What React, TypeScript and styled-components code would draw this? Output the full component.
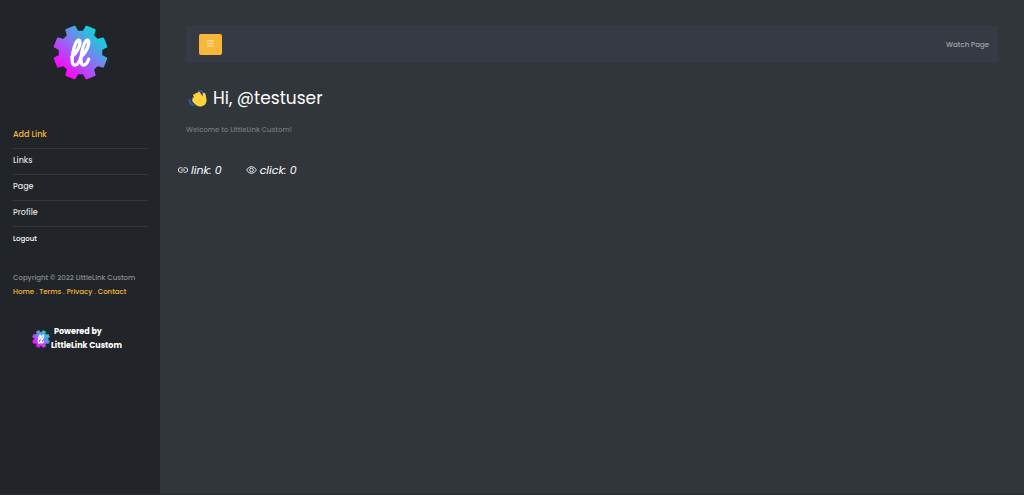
import React from "react";
import styled, { createGlobalStyle } from "styled-components";

const GlobalStyle = createGlobalStyle`
  *, *::before, *::after { box-sizing: border-box; }
  body {
    margin: 0;
    background: #31363b;
    color: #fff;
    font-family: Poppins, Inter, "Open Sans", sans-serif;
    font-size: 7px;
    font-weight: 500;
    line-height: 14px;
  }
`;

const Layout = styled.div`
  display: flex;
  min-height: 100vh;
  border-bottom: 1px solid #2a2a31;
`;

const Sidebar = styled.aside`
  flex: 0 0 160px;
  min-width: 0;
  padding: 25px 12px 0 13px;
  background: #212529;
`;

const Brand = styled.a`
  display: flex;
  justify-content: center;
  padding-bottom: 43px;
`;

const Menu = styled.ul`
  list-style: none;
  margin: 0;
  padding: 0;
`;

const MenuItem = styled.li`
  & + & { border-top: 1px solid #33373c; }
`;

const MenuLink = styled.a<{ $active?: boolean }>`
  display: block;
  padding: 4px 0 6px;
  font-size: 8px;
  line-height: 15px;
  text-decoration: none;
  color: ${(p) => (p.$active ? "#f8b739" : "#dcddde")};
`;

const LogoutButton = styled.button`
  display: block;
  padding: 4px 0;
  border: 0;
  background: none;
  color: #fff;
  font: inherit;
  line-height: 15px;
`;

const Footer = styled.footer`
  margin-top: 21px;
  color: #8a8c8f;
  white-space: nowrap;
`;

const FooterLink = styled.a`
  color: #f8b739;
  text-decoration: none;
`;

const Powered = styled.a`
  display: flex;
  align-items: center;
  gap: 1px;
  margin: 26px 0 0 19px;
  color: #fff;
  font-size: 8px;
  font-weight: 700;
  text-decoration: none;
  white-space: nowrap;
`;

const PoweredText = styled.span`
  text-indent: 3px;
  & > span { display: block; text-indent: 0; }
`;

const Main = styled.main`
  flex: 1;
  min-width: 0;
  padding: 26px 26px 0;
`;

const Navbar = styled.nav`
  display: flex;
  align-items: center;
  justify-content: space-between;
  padding: 8px 9px 8px 13px;
  background: #353a43;
`;

const MenuToggle = styled.button`
  display: flex;
  align-items: center;
  justify-content: center;
  width: 23px;
  height: 21px;
  padding: 0 0 2px;
  border: 0;
  border-radius: 2px;
  background: #f8b739;
`;

const WatchLink = styled.a`
  color: #a5a7aa;
  text-decoration: none;
`;

const Greeting = styled.h2`
  display: flex;
  align-items: center;
  gap: 6px;
  margin: 22px 0 0 2px;
  font-size: 17px;
  font-weight: 400;
  line-height: 26px;
`;

const Welcome = styled.p`
  margin: 12px 0 0;
  color: #76797c;
`;

const Stats = styled.div`
  display: flex;
  gap: 24px;
  margin: 25px 0 0 -8px;
  font-size: 11px;
  font-style: italic;
  font-weight: 400;
  line-height: 16px;
`;

const Stat = styled.span`
  display: flex;
  align-items: center;
  gap: 3px;
`;

const gearPath = (() => {
  const pts: string[] = [];
  const add = (deg: number, r: number) => {
    const a = (deg * Math.PI) / 180;
    pts.push(`${(50 + r * Math.cos(a)).toFixed(2)} ${(50 + r * Math.sin(a)).toFixed(2)}`);
  };
  for (let i = 0; i < 8; i++) {
    const c = 22.5 + i * 45;
    add(c - 14, 38);
    add(c - 9.5, 48);
    add(c + 9.5, 48);
    add(c + 14, 38);
  }
  return `M${pts.join("L")}Z`;
})();

function GearLogo({ size, id }: { size: number; id: string }) {
  return (
    <svg width={size} height={size} viewBox="0 0 100 100" aria-hidden="true">
      <defs>
        <linearGradient id={id} x1="0.18" y1="0.85" x2="0.82" y2="0.15">
          <stop offset="0" stopColor="#fb08ff" />
          <stop offset="0.5" stopColor="#8a72f2" />
          <stop offset="1" stopColor="#16cfdc" />
        </linearGradient>
      </defs>
      <path d={gearPath} fill={`url(#${id})`} stroke={`url(#${id})`} strokeWidth="4" strokeLinejoin="round" />
      <g fill="none" stroke="#fff" strokeWidth="6" strokeLinecap="round" strokeLinejoin="round">
        <path d="M34 58C42 52 50 38 49 30C47 24 42 29 39 39C35 52 32 72 39 73C44 73 48 67 50 61" />
        <path d="M50 59C58 53 66 38 65 30C63 24 58 29 55 39C51 52 48 72 55 73C60 73 63 68 65 62" />
      </g>
    </svg>
  );
}

function WaveIcon() {
  return (
    <svg width="19" height="19" viewBox="0 0 36 36" aria-hidden="true">
      <path d="M21 4q7-1 8 7M3 21q0 8 7 9" fill="none" stroke="#33599c" strokeWidth="4" strokeLinecap="round" />
      <path d="M9 20c-2-3 1-5 3-3l-2-4c-1-3 2-5 4-2-1-4 2-5 4-3 0-3 3-4 5-1l5 7c0-3-1-6 2-7 4 0 4 7 5 12 1 8-3 13-10 14-6 1-11-3-16-9-2-2-1-4 0-4z" fill="#ffd23f" />
    </svg>
  );
}

const menu = ["Add Link", "Links", "Page", "Profile"];
const footerLinks = ["Home", "Terms", "Privacy", "Contact"];

export default function App() {
  return (
    <>
      <GlobalStyle />
      <Layout>
        <Sidebar>
          <Brand href="#" aria-label="LittleLink Custom">
            <GearLogo size={55} id="brand-gradient" />
          </Brand>
          <Menu>
            {menu.map((label, i) => (
              <MenuItem key={label}>
                <MenuLink href="#" $active={i === 0}>{label}</MenuLink>
              </MenuItem>
            ))}
            <MenuItem>
              <LogoutButton type="button">Logout</LogoutButton>
            </MenuItem>
          </Menu>
          <Footer>
            <div>Copyright © 2022 LittleLink Custom</div>
            <div>
              {footerLinks.map((label, i) => (
                <React.Fragment key={label}>
                  {i > 0 && " . "}
                  <FooterLink href="#">{label}</FooterLink>
                </React.Fragment>
              ))}
            </div>
          </Footer>
          <Powered href="#">
            <GearLogo size={18} id="powered-gradient" />
            <PoweredText>
              Powered by
              <span>LittleLink Custom</span>
            </PoweredText>
          </Powered>
        </Sidebar>
        <Main>
          <Navbar>
            <MenuToggle type="button" aria-label="Toggle menu">
              <svg width="7" height="7" viewBox="0 0 7 7" aria-hidden="true">
                <path d="M0 1h7M0 3.5h7M0 6h7" stroke="#fde3b0" strokeWidth="1" />
              </svg>
            </MenuToggle>
            <WatchLink href="#">Watch Page</WatchLink>
          </Navbar>
          <Greeting>
            <WaveIcon />
            Hi, @testuser
          </Greeting>
          <Welcome>Welcome to LittleLink Custom!</Welcome>
          <Stats>
            <Stat>
              <svg width="10" height="6" viewBox="0 0 10 6" fill="none" stroke="#e6e7e8" aria-hidden="true">
                <path d="M4.5 1.2A2 2 0 0 0 3 .7H2.6a2.2 2.2 0 0 0 0 4.6H3a2 2 0 0 0 1.5-.5M5.5 1.2A2 2 0 0 1 7 .7h.4a2.2 2.2 0 0 1 0 4.6H7a2 2 0 0 1-1.5-.5M3 3h4" />
              </svg>
              link: 0
            </Stat>
            <Stat>
              <svg width="11" height="8" viewBox="0 0 11 8" fill="none" stroke="#e6e7e8" aria-hidden="true">
                <path d="M.6 4Q2.6.6 5.5.6T10.4 4Q8.4 7.4 5.5 7.4T.6 4Z" />
                <circle cx="5.5" cy="4" r="1.8" />
              </svg>
              click: 0
            </Stat>
          </Stats>
        </Main>
      </Layout>
    </>
  );
}
